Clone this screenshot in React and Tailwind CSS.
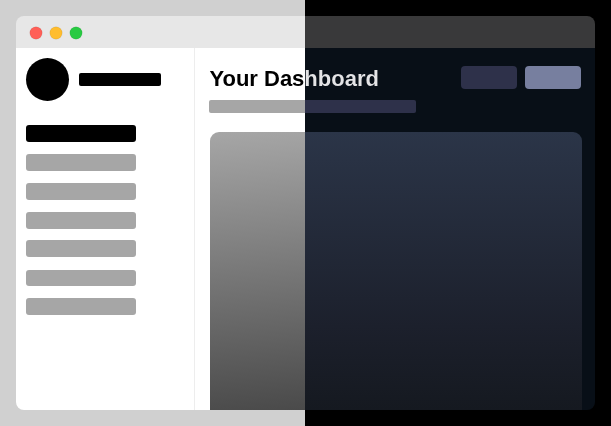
const navItems = [
  "ml-[9.5px] mt-0 bg-black",
  "ml-[9.5px] mt-[12px] bg-[#a6a6a6]",
  "ml-[9.5px] mt-[12px] bg-[#a6a6a6]",
  "ml-[10px] mt-[12px] bg-[#a6a6a6]",
  "ml-[9.7px] mt-[11.4px] bg-[#a6a6a6]",
  "ml-[9.9px] mt-[12.4px] bg-[#a6a6a6]",
  "ml-[9.9px] mt-[11.2px] bg-[#a6a6a6]",
];

function WindowDot({ className }) {
  return (
    <svg viewBox="0 0 14 14" className={`size-[14px] ${className}`}>
      <circle cx="7" cy="7" r="6.2" fill="currentColor" />
      <circle cx="7" cy="7" r="6.2" fill="none" stroke="#000" strokeOpacity="0.1" strokeWidth="0.7" />
    </svg>
  );
}

function TitleBar() {
  return (
    <header className="flex h-8 shrink-0 items-center gap-[6px] bg-[linear-gradient(90deg,#e7e7e7_289px,#39393a_289px)] pt-[2px] pl-[13px]">
      <WindowDot className="text-[#ff5f57]" />
      <WindowDot className="text-[#ffbd2e]" />
      <WindowDot className="text-[#28ca42]" />
    </header>
  );
}

function Sidebar() {
  return (
    <aside className="w-[179px] shrink-0 border-r border-[#ededed] bg-white pt-[10px]">
      <div className="flex items-center gap-[10px] pl-[9.7px]">
        <div className="size-[43.3px] rounded-full bg-black" />
        <div className="h-[12.7px] w-[82.4px] rounded-[2px] bg-black" />
      </div>
      <nav className="mt-[24px]">
        {navItems.map((item, i) => (
          <div key={i} className={`h-[16.9px] w-[110.4px] rounded-[3px] ${item}`} />
        ))}
      </nav>
    </aside>
  );
}

function Dashboard() {
  return (
    <main className="flex min-w-0 flex-1 flex-col bg-[linear-gradient(90deg,#fff_110px,#080f17_110px)] pr-[13px] pl-[15px]">
      <div className="flex h-[52.3px] justify-between pt-[18.3px] pr-[1px]">
        <h1 className="mt-[0.7px] -ml-[0.6px] h-6 bg-[linear-gradient(90deg,#000_95.6px,#e4e4e6_95.6px)] bg-clip-text font-['Liberation_Sans',Arial,sans-serif] text-[22px] leading-6 font-bold whitespace-nowrap text-transparent">
          Your Dashboard
        </h1>
        <div className="flex gap-2">
          <div className="h-[22.5px] w-14 rounded-[4px] bg-[#2e314a]" />
          <div className="h-[22.5px] w-14 rounded-[4px] bg-[#777f9f]" />
        </div>
      </div>
      <div className="-ml-[0.7px] h-[12.7px] w-[206.7px] shrink-0 rounded-[2px] bg-[linear-gradient(90deg,#a6a6a6_95.7px,#2e314a_95.7px)]" />
      <section className="mt-[19px] flex flex-1 overflow-hidden rounded-t-[9px]">
        <div className="w-[95px] bg-[linear-gradient(176deg,#a6a6a6,#4a4a4a)]" />
        <div className="flex-1 bg-[linear-gradient(180deg,#2b3548,#1c202c_70%,#151920)]" />
      </section>
    </main>
  );
}

export default function App() {
  return (
    <div className="h-[426px] w-[611px] bg-[linear-gradient(90deg,#d0d0d0_305px,#000_305px)] p-4">
      <div className="flex h-[394px] flex-col overflow-hidden rounded-lg">
        <TitleBar />
        <div className="flex min-h-0 flex-1">
          <Sidebar />
          <Dashboard />
        </div>
      </div>
    </div>
  );
}
